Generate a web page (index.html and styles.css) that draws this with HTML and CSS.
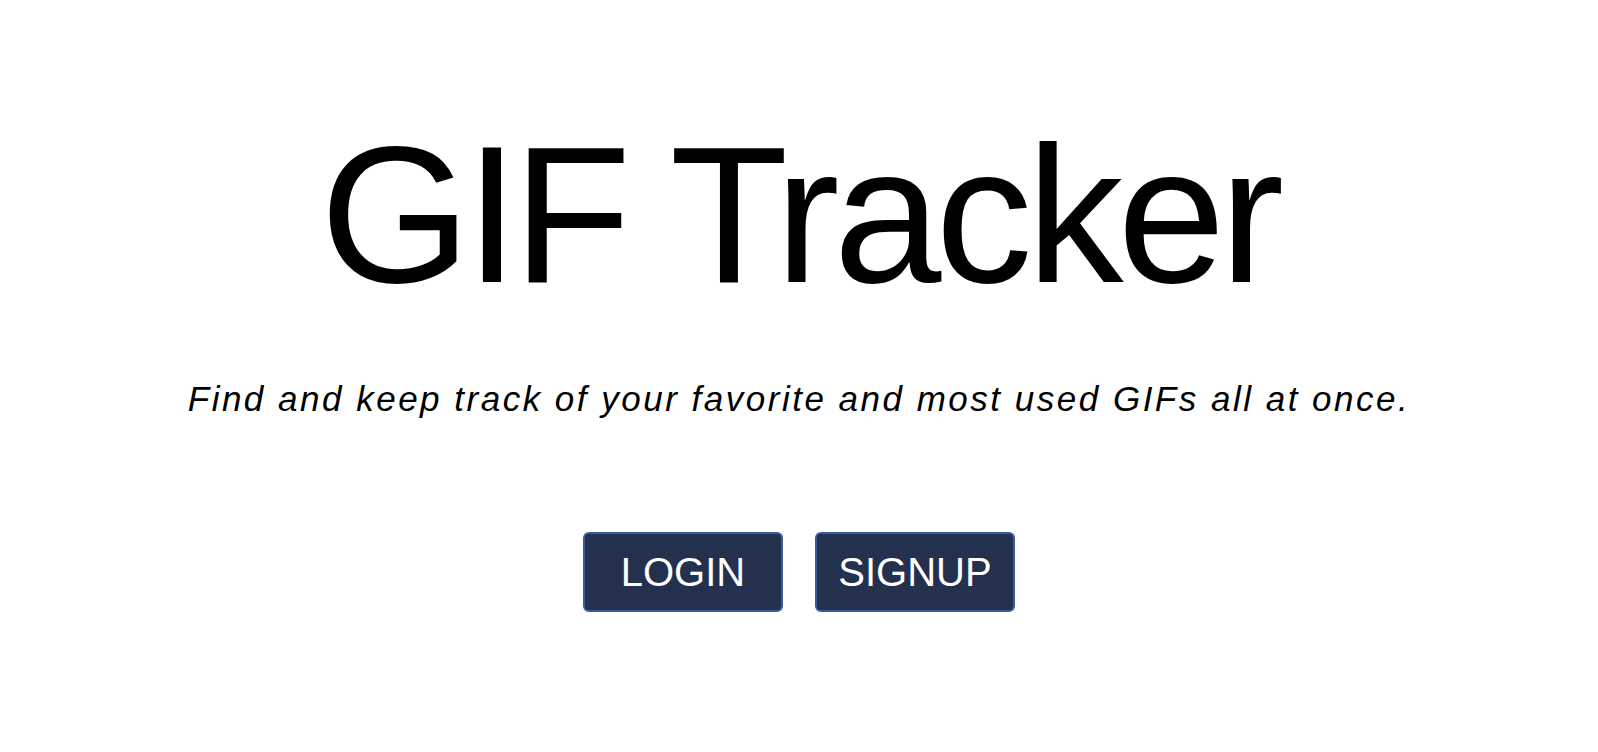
FILE: index.html
```html
<!DOCTYPE html>
<html lang="en">
<head>
<meta charset="utf-8">
<title>GIF Tracker</title>
<link rel="stylesheet" href="styles.css">
</head>
<body>
<main class="landing">
  <h1 class="title">GIF Tracker</h1>
  <p class="tagline">Find and keep track of your favorite and most used GIFs all at once.</p>
  <div class="actions">
    <button class="btn" type="button">LOGIN</button>
    <button class="btn" type="button">SIGNUP</button>
  </div>
</main>
</body>
</html>
```
FILE: styles.css
```css
html, body {
  margin: 0;
  padding: 0;
  background: #ffffff;
}
body {
  font-family: "Liberation Sans", Arial, Helvetica, sans-serif;
  color: #000000;
}
.landing {
  display: flex;
  flex-direction: column;
  align-items: center;
  padding-top: 118px;
}
.title {
  margin: 0;
  font-size: 194px;
  font-weight: 400;
  line-height: 194px;
  letter-spacing: -6px;
}
.tagline {
  margin: 67px 0 0 0;
  font-size: 35px;
  font-style: italic;
  line-height: 40px;
  letter-spacing: 2.5px;
}
.actions {
  display: flex;
  gap: 32px;
  margin-top: 113px;
}
.btn {
  width: 200px;
  height: 80px;
  background: #23314f;
  color: #ffffff;
  border: 2px solid #3a5c9c;
  border-radius: 6px;
  font-family: "Liberation Sans", Arial, Helvetica, sans-serif;
  font-size: 40px;
  padding: 0;
  cursor: pointer;
}
```
